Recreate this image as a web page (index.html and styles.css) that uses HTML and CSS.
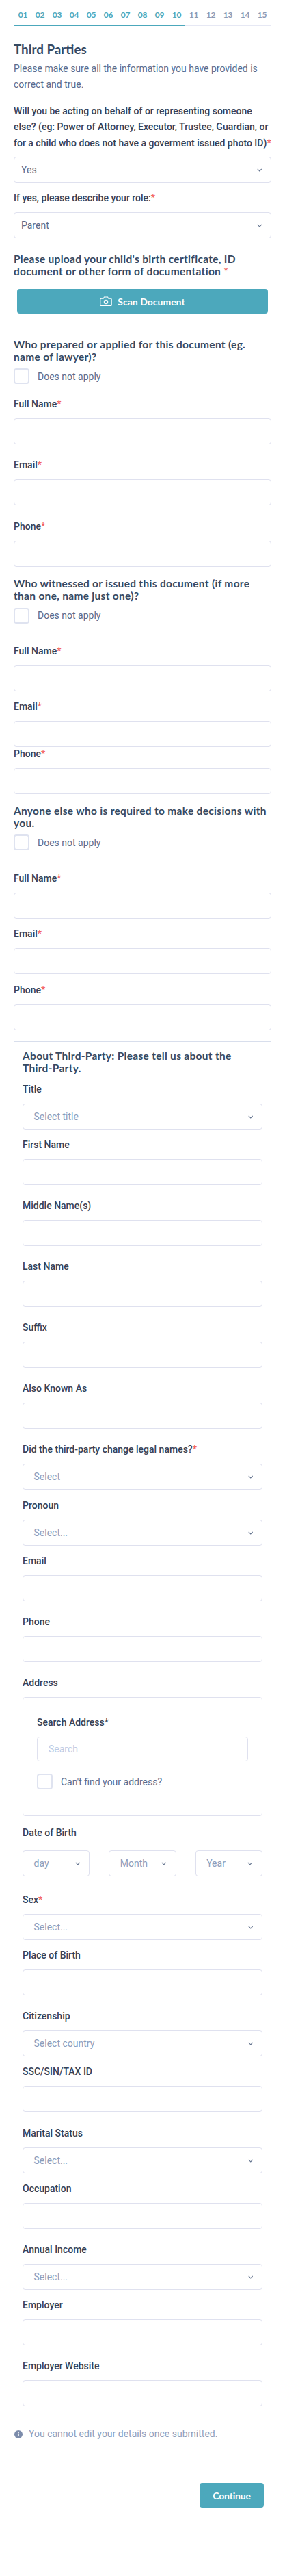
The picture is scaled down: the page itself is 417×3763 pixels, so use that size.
FILE: index.html
```html
<!DOCTYPE html>
<html lang="en">
<head>
<meta charset="utf-8">
<title>Third Parties</title>
<link rel="stylesheet" href="styles.css">
</head>
<body>
<svg class="defs" width="0" height="0" aria-hidden="true"><symbol id="chev" viewBox="0 0 8 5"><path d="M.8.8 4 4 7.2.8" fill="none" stroke="currentColor" stroke-width="1.1"/></symbol></svg>
<main class="page">
  <nav class="steps">
    <span class="step on">01</span><span class="step on">02</span><span class="step on">03</span><span class="step on">04</span><span class="step on">05</span><span class="step on">06</span><span class="step on">07</span><span class="step on">08</span><span class="step on">09</span><span class="step on">10</span><span class="step">11</span><span class="step">12</span><span class="step">13</span><span class="step">14</span><span class="step">15</span>
  </nav>
  <h1 class="title">Third Parties</h1>
  <p class="intro">Please make sure all the information you have provided is correct and true.</p>

  <label class="question">Will you be acting on behalf of or representing someone else? (eg: Power of Attorney, Executor, Trustee, Guardian, or for a child who does not have a goverment issued photo ID)<b>*</b></label>
  <div class="select value"><span>Yes</span><svg class="chev"><use href="#chev"/></svg></div>

  <div class="field m-s"><label class="lab">If yes, please describe your role:<b>*</b></label><div class="select value"><span>Parent</span><svg class="chev"><use href="#chev"/></svg></div></div>

  <h2 class="head up">Please upload your child's birth certificate, ID document or other form of documentation <b>*</b></h2>
  <button class="btn scan" type="button">
    <svg class="cam" viewBox="0 0 18 14" fill="none" stroke="#fff" stroke-width="1.1"><path d="M1.8 3.2h3.4L6.4 1h5.2l1.2 2.2h3.4c.6 0 1 .4 1 1v8.2c0 .6-.4 1-1 1H1.8c-.6 0-1-.4-1-1V4.200c0-.6.4-1 1-1z"/><circle cx="9" cy="8" r="2.700"/></svg>
    Scan Document
  </button>

  <h2 class="head h-a">Who prepared or applied for this document (eg. name of lawyer)?</h2>
  <div class="check"><i class="box"></i><span>Does not apply</span></div>
  <div class="field m-a"><label class="lab">Full Name<b>*</b></label><input class="input" type="text"></div>
  <div class="field m-l"><label class="lab">Email<b>*</b></label><input class="input" type="text"></div>
  <div class="field m-w"><label class="lab">Phone<b>*</b></label><input class="input" type="text"></div>

  <h2 class="head h-b">Who witnessed or issued this document (if more than one, name just one)?</h2>
  <div class="check c-b"><i class="box"></i><span>Does not apply</span></div>
  <div class="field m-b"><label class="lab">Full Name<b>*</b></label><input class="input" type="text"></div>
  <div class="field m-s"><label class="lab">Email<b>*</b></label><input class="input" type="text"></div>
  <div class="field"><label class="lab">Phone<b>*</b></label><input class="input" type="text"></div>

  <h2 class="head h-c">Anyone else who is required to make decisions with you.</h2>
  <div class="check"><i class="box"></i><span>Does not apply</span></div>
  <div class="field m-c"><label class="lab">Full Name<b>*</b></label><input class="input" type="text"></div>
  <div class="field m-s"><label class="lab">Email<b>*</b></label><input class="input" type="text"></div>
  <div class="field m-h"><label class="lab">Phone<b>*</b></label><input class="input" type="text"></div>

  <section class="panel">
    <h2 class="head">About Third-Party: Please tell us about the Third-Party.</h2>
    <div class="field m-s"><label class="lab">Title</label><div class="select"><span>Select title</span><svg class="chev"><use href="#chev"/></svg></div></div>
    <div class="field m-s"><label class="lab">First Name</label><input class="input" type="text"></div>
    <div class="field m-l"><label class="lab">Middle Name(s)</label><input class="input" type="text"></div>
    <div class="field m-l"><label class="lab">Last Name</label><input class="input" type="text"></div>
    <div class="field m-l"><label class="lab">Suffix</label><input class="input" type="text"></div>
    <div class="field m-l"><label class="lab">Also Known As</label><input class="input" type="text"></div>
    <div class="field m-l"><label class="lab">Did the third-party change legal names?<b>*</b></label><div class="select"><span>Select</span><svg class="chev"><use href="#chev"/></svg></div></div>
    <div class="field m-n"><label class="lab">Pronoun</label><div class="select"><span>Select...</span><svg class="chev"><use href="#chev"/></svg></div></div>
    <div class="field m-s"><label class="lab">Email</label><input class="input" type="text"></div>
    <div class="field m-l"><label class="lab">Phone</label><input class="input" type="text"></div>
    <div class="field m-l"><label class="lab">Address</label>
      <div class="addr">
        <label class="lab">Search Address*</label>
        <input class="input search" type="text" placeholder="Search">
        <div class="check c-addr"><i class="box"></i><span>Can't find your address?</span></div>
      </div>
    </div>
    <div class="field m-d"><label class="lab l-d">Date of Birth</label>
      <div class="dob">
        <div class="select"><span>day</span><svg class="chev"><use href="#chev"/></svg></div>
        <div class="select"><span>Month</span><svg class="chev"><use href="#chev"/></svg></div>
        <div class="select"><span>Year</span><svg class="chev"><use href="#chev"/></svg></div>
      </div>
    </div>
    <div class="field m-x"><label class="lab">Sex<b>*</b></label><div class="select"><span>Select...</span><svg class="chev"><use href="#chev"/></svg></div></div>
    <div class="field m-s"><label class="lab">Place of Birth</label><input class="input" type="text"></div>
    <div class="field m-l"><label class="lab">Citizenship</label><div class="select"><span>Select country</span><svg class="chev"><use href="#chev"/></svg></div></div>
    <div class="field m-s"><label class="lab">SSC/SIN/TAX ID</label><input class="input" type="text"></div>
    <div class="field m-w"><label class="lab">Marital Status</label><div class="select"><span>Select...</span><svg class="chev"><use href="#chev"/></svg></div></div>
    <div class="field m-s"><label class="lab">Occupation</label><input class="input" type="text"></div>
    <div class="field m-l"><label class="lab">Annual Income</label><div class="select"><span>Select...</span><svg class="chev"><use href="#chev"/></svg></div></div>
    <div class="field m-s"><label class="lab">Employer</label><input class="input" type="text"></div>
    <div class="field m-l"><label class="lab">Employer Website</label><input class="input" type="text"></div>
  </section>

  <p class="note">
    <svg class="info" viewBox="0 0 12 12"><circle cx="6" cy="6" r="6" fill="#7c8cab"/><rect x="5.200" y="5.200" width="1.600" height="3.800" fill="#fff"/><rect x="5.200" y="2.900" width="1.600" height="1.500" fill="#fff"/></svg>
    You cannot edit your details once submitted.
  </p>
  <div class="actions"><button class="btn cont" type="button">Continue</button></div>
</main>
</body>
</html>
```

FILE: styles.css
```css
* { box-sizing: border-box; }
html, body { margin: 0; padding: 0; background: #fff; }
body { font-family: Roboto, "Liberation Sans", sans-serif; font-size: 14px; color: #364156; }
.defs { position: absolute; }
.page { padding: 0 20px 100px; }
b { color: #f25c5c; font-weight: 500; }

.steps { display: flex; margin-left: 1px; }
.step { width: 25px; height: 38px; padding-top: 13px; line-height: 18px; text-align: center; font-family: Lato, sans-serif; font-size: 12px; letter-spacing: -.3px; font-weight: 700; color: #8a9ab5; border-bottom: 1px solid #e6e8f4; }
.step.on { color: #4ca8bc; border-bottom: 2px solid #4ca8bc; }

.title { margin: 22px 0 0; font-family: Lato, sans-serif; font-size: 18.8px; line-height: 24px; font-weight: 700; color: #364a63; }
.intro { margin: 4.5px 0 0; line-height: 23px; color: #5b6b8c; }
.question { display: block; margin-top: 16px; line-height: 23.5px; font-weight: 500; }
.question + .select { margin-top: 8px; }

.field { display: block; }
.m-s { margin-top: 12px; }
.m-h { margin-top: 12.5px; }
.m-n { margin-top: 13px; }
.m-l { margin-top: 20px; }
.m-w { margin-top: 21px; }
.m-a { margin-top: 19px; }
.m-b { margin-top: 30.5px; }
.m-c { margin-top: 31px; }
.m-d { margin-top: 13.5px; }
.m-x { margin-top: 24px; }
.lab { display: block; height: 21px; line-height: 21px; margin-bottom: 10px; font-weight: 500; }

.input, .select { display: flex; align-items: center; width: 100%; height: 38px; padding: 0 10px; background: #fff; border: 1px solid #dfe1ef; border-radius: 4px; outline: none; font: inherit; }
.select { justify-content: space-between; padding: 0 13px 0 15.5px; color: #8c9dbb; }
.select.value { padding-left: 10px; color: #5b6b8c; }
.chev { width: 7.5px; height: 5px; color: #64748f; flex: none; }

.head { margin: 0; font-family: Lato, sans-serif; font-size: 15.5px; line-height: 18px; font-weight: 700; color: #364a63; letter-spacing: .3px; }
.up { margin-top: 22px; line-height: 17.5px; }
.up b { font-weight: 700; }
.h-a { margin-top: 37px; line-height: 17.5px; }
.h-b { margin-top: 15px; }
.h-c { margin-top: 16px; line-height: 17.5px; }

.btn { display: flex; align-items: center; justify-content: center; height: 36px; border: 0; border-radius: 4px; background: #4ca8bc; color: #fff; font-family: Lato, sans-serif; font-size: 14px; font-weight: 700; }
.scan { margin: 17px 5px 0; width: 367px; gap: 8px; }
.cam { width: 18px; height: 14px; }
.cont { width: 94px; letter-spacing: -.2px; }

.check { display: flex; align-items: center; gap: 12px; margin-top: 8px; height: 23px; color: #5b6b8c; }
.c-b { margin-top: 8.5px; }
.box { display: block; width: 23px; height: 23px; border: 2px solid #dfe3f0; border-radius: 4px; }

.panel { margin-top: 16.5px; padding: 11px 12px 11px; border: 1px solid #d8deec; }
.addr { height: 174px; padding: 26px 20px 0; border: 1px solid #dfe1ef; border-radius: 4px; }
.search { height: 36px; padding-left: 16px; }
.search::placeholder { color: #bccbe5; opacity: 1; }
.c-addr { margin-top: 18px; }
.l-d { margin-bottom: 15.5px; }
.dob { display: flex; gap: 28px; }
.dob .select { flex: 1; min-width: 0; }

.note { display: flex; align-items: center; gap: 9px; margin: 18px 0 0 1px; line-height: 20px; color: #8c9dbb; }
.info { width: 12px; height: 12px; flex: none; margin-top: 2px; }
.actions { display: flex; justify-content: flex-end; margin-top: 62px; padding-right: 11px; }
```
